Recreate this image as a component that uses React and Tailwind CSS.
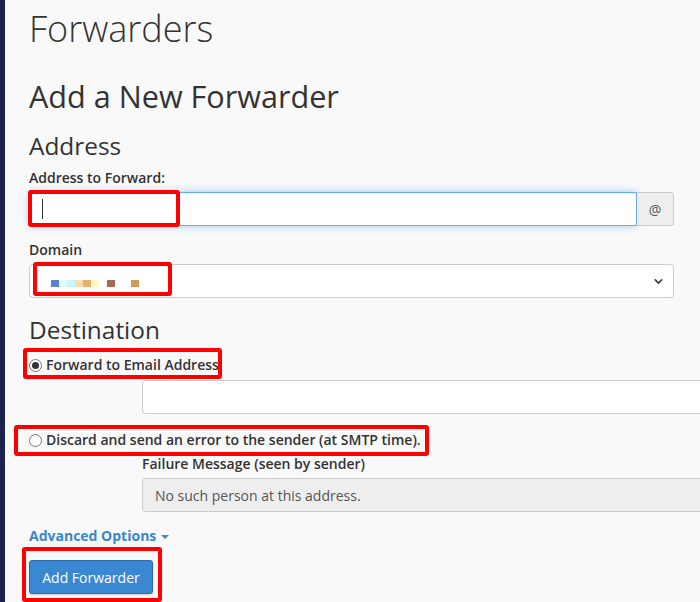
import { ChevronDown } from "lucide-react";

const font = { fontFamily: '"Open Sans", "Noto Sans", sans-serif' };

function Marker({ className }) {
	return <div className={`pointer-events-none absolute rounded-[3px] border-[4px] border-[#ff0000] ${className}`} />;
}

function Radio({ checked }) {
	return (
		<span className="flex h-[13px] w-[13px] shrink-0 items-center justify-center rounded-full border border-[#767676] bg-white">
			{checked && <span className="h-[7px] w-[7px] rounded-full bg-[#333]" />}
		</span>
	);
}

const swatches = [
	["#5b84c4", 0],
	["#e3fbfd", 0],
	["#c4f6fb", 0],
	["#fbdca8", 0],
	["#e8b06f", 0],
	["#fdf9c9", 0],
	["#a86b52", 8],
	["#cf985c", 16],
];

export default function App() {
	return (
		<div className="relative flex min-h-[602px] overflow-hidden bg-[#f9f9f9] text-[#333]" style={font}>
			<div className="w-[5px] shrink-0 bg-[#1d2252]" />

			<div className="w-[645px] shrink-0 pl-[24px]">
				<h1 className="mt-[9px] text-[36px] font-light leading-[40px]">Forwarders</h1>
				<h2 className="mt-[31px] text-[30.6px] leading-[33px]">Add a New Forwarder</h2>
				<h3 className="mt-[20px] text-[24.4px] leading-[26px]">Address</h3>

				<div className="mt-[9px] text-[14px] font-semibold leading-[20px]">Address to Forward:</div>
				<div className="mt-[4px] flex h-[34px] w-[645px]">
					<div className="flex flex-1 items-center rounded-l-[4px] border border-[#66afe9] bg-white pl-[12px] shadow-[inset_0_1px_1px_rgba(0,0,0,0.075),0_0_8px_rgba(102,175,233,0.6)]">
						<span className="h-[20px] w-px bg-[#333]" />
					</div>
					<div className="flex w-[37px] items-center justify-center rounded-r-[4px] border border-l-0 border-[#ccc] bg-[#eee] text-[14px] text-[#555]">
						@
					</div>
				</div>

				<div className="mt-[14px] text-[14px] font-semibold leading-[20px]">Domain</div>
				<div className="mt-[4px] flex h-[34px] w-[645px] items-center justify-between rounded-[4px] border border-[#ccc] bg-white pl-[21px] pr-[8px]">
					<div className="mt-[5px] flex h-[7px]">
						{swatches.map(([c, gap], i) => (
							<span key={i} className="h-[7px] w-[8px]" style={{ backgroundColor: c, marginLeft: gap }} />
						))}
					</div>
					<ChevronDown size={13} strokeWidth={3.2} color="#444" />
				</div>

				<h3 className="mt-[19px] text-[24.4px] leading-[26px]">Destination</h3>

				<label className="mt-[12px] flex items-center gap-[4px] text-[14px] font-semibold leading-[20px]">
					<Radio checked />
					<span>Forward to Email Address</span>
				</label>
				<div className="ml-[113px] mt-[5px] h-[34px] w-[645px] rounded-[4px] border border-[#ccc] bg-white" />

				<label className="mt-[16px] flex items-center gap-[4px] text-[14px] font-semibold leading-[20px]">
					<Radio />
					<span>Discard and send an error to the sender (at SMTP time).</span>
				</label>
				<div className="ml-[113px] mt-[4px] text-[14px] font-semibold leading-[20px]">Failure Message (seen by sender)</div>
				<div className="ml-[113px] mt-[4px] flex h-[34px] w-[645px] items-center rounded-[4px] border border-[#ccc] bg-[#eee] pl-[12px] text-[14px] text-[#555]">
					No such person at this address.
				</div>

				<div className="mt-[14px] flex items-center gap-[5px] text-[14px] font-bold leading-[20px] text-[#3b87cc]">
					<span>Advanced Options</span>
					<span className="mt-[2px] h-0 w-0 border-x-[4px] border-t-[4px] border-x-transparent border-t-[#3b87cc]" />
				</div>

				<button className="mt-[14px] h-[34px] w-[124px] rounded-[3px] border border-[#2d6fae] bg-[#3a88d2] text-[14px] text-white shadow-[0_1px_2px_rgba(0,0,0,0.2)]">
					Add Forwarder
				</button>
			</div>

			<Marker className="left-[28px] top-[190px] h-[37px] w-[152px]" />
			<Marker className="left-[33px] top-[262px] h-[34px] w-[139px]" />
			<Marker className="left-[23px] top-[348px] h-[31px] w-[199px]" />
			<Marker className="left-[14px] top-[425px] h-[31px] w-[415px]" />
			<Marker className="left-[22px] top-[547px] h-[55px] w-[140px]" />
		</div>
	);
}
